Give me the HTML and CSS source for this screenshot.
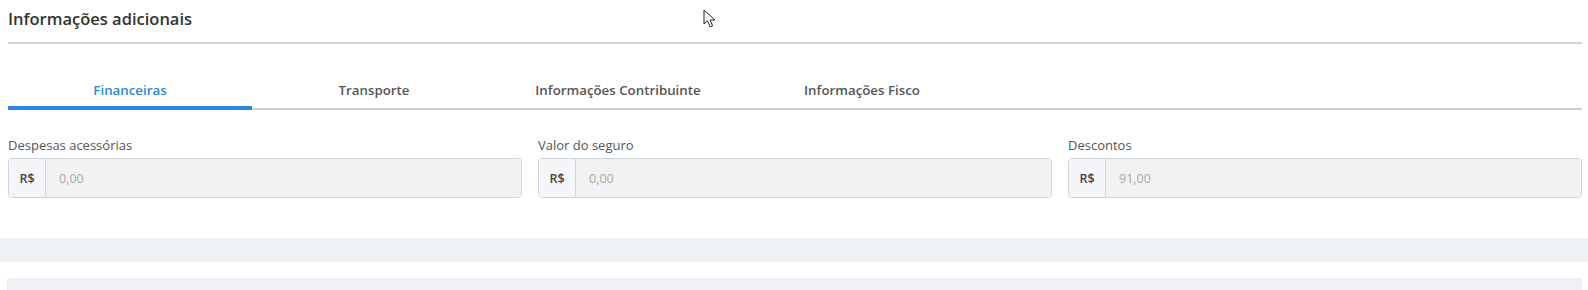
FILE: index.html
```html
<!DOCTYPE html>
<html lang="pt-BR">
  <head>
    <meta charset="UTF-8" />
    <meta name="viewport" content="width=device-width, initial-scale=1.0" />
    <title>Informações adicionais</title>
    <link rel="stylesheet" href="styles.css">
  </head>
  <body>
    <section class="panel">
      <h2 class="panel-title">Informações adicionais</h2>

      <nav class="tabs">
        <a class="tab active" href="#">Financeiras</a>
        <a class="tab" href="#">Transporte</a>
        <a class="tab" href="#">Informações Contribuinte</a>
        <a class="tab" href="#">Informações Fisco</a>
      </nav>

      <div class="fields">
        <div class="field">
          <label for="despesas">Despesas acessórias</label>
          <div class="input-group">
            <span class="addon">R$</span>
            <input type="text" id="despesas" placeholder="0,00" disabled />
          </div>
        </div>
        <div class="field">
          <label for="seguro">Valor do seguro</label>
          <div class="input-group">
            <span class="addon">R$</span>
            <input type="text" id="seguro" placeholder="0,00" disabled />
          </div>
        </div>
        <div class="field">
          <label for="descontos">Descontos</label>
          <div class="input-group">
            <span class="addon">R$</span>
            <input type="text" id="descontos" placeholder="91,00" disabled />
          </div>
        </div>
      </div>
    </section>

    <div class="band"></div>
    <div class="band-inner"></div>

    <svg class="cursor" width="14" height="21" viewBox="0 0 14 21">
      <path d="M1 1 L1 15 L4.5 11.8 L7.2 18 L9.6 17 L7 11 L12 11 Z" fill="#fff" stroke="#222" stroke-width="1" stroke-linejoin="round" />
    </svg>
  </body>
</html>
```

FILE: styles.css
```css
body {
  margin: 0;
  font-family: "Open Sans", "Noto Sans", Arial, sans-serif;
  background-color: #fff;
  color: #555;
  position: relative;
}

.panel {
  padding: 0 6px 0 8px;
}

.panel-title {
  margin: 0;
  padding-top: 7px;
  height: 44px;
  box-sizing: border-box;
  font-size: 16.5px;
  font-weight: 600;
  color: #333;
  border-bottom: 2px solid #d2d7de;
}

.tabs {
  display: flex;
  margin-top: 35px;
  border-bottom: 2px solid #cfcfcf;
}

.tab {
  width: 244px;
  text-align: center;
  font-size: 13.3px;
  font-weight: 600;
  color: #555;
  text-decoration: none;
  padding: 2px 0 7px;
  border-bottom: 4px solid transparent;
  margin-bottom: -2px;
}

.tab.active {
  color: #2e86de;
  border-bottom-color: #2e86de;
}

.fields {
  display: grid;
  grid-template-columns: repeat(3, 1fr);
  gap: 16px;
  margin-top: 26px;
}

.field label {
  display: block;
  font-size: 13px;
  color: #555;
  margin-bottom: 4px;
}

.input-group {
  display: flex;
  height: 40px;
  box-sizing: border-box;
  border: 1px solid #ccd5de;
  border-radius: 4px;
  overflow: hidden;
}

.addon {
  width: 36px;
  display: flex;
  align-items: center;
  justify-content: center;
  background-color: #f3f5f9;
  border-right: 1px solid #ccd5de;
  font-size: 12.5px;
  font-weight: 600;
  color: #444;
}

.input-group input {
  flex: 1;
  border: none;
  outline: none;
  background-color: #f2f2f2;
  padding: 0 13px;
  font-family: inherit;
  font-size: 12.5px;
}

.input-group input::placeholder {
  color: #a9a9a9;
}

.band {
  margin-top: 40px;
  height: 24px;
  background-color: #eef1f6;
}

.band-inner {
  margin: 16px 6px 0 7px;
  height: 12px;
  background-color: #f0f1f6;
}

.cursor {
  position: absolute;
  top: 9px;
  left: 703px;
}
```
